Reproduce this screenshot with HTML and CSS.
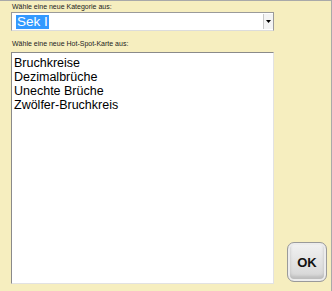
FILE: index.html
```html
<!DOCTYPE html>
<html lang="de">

<head>
    <meta charset="UTF-8">
    <meta name="viewport" content="width=device-width, initial-scale=1.0">
    <title>Hot-Spot-Karte</title>
    <link rel="stylesheet" href="styles.css">
</head>

<body>
    <div class="panel">
        <div class="main">
            <div class="cap">Wähle eine neue Kategorie aus:</div>
            <div class="combo">
                <span class="combo-text">Sek I</span>
                <span class="combo-btn">
                    <svg width="5" height="3" viewBox="0 0 5 3"><path d="M0 0H5L2.5 3Z" fill="#000"/></svg>
                </span>
            </div>

            <div class="cap cap2">Wähle eine neue Hot-Spot-Karte aus:</div>
            <ul class="list">
                <li>Bruchkreise</li>
                <li>Dezimalbrüche</li>
                <li>Unechte Brüche</li>
                <li>Zwölfer-Bruchkreis</li>
            </ul>
        </div>

        <div class="side">
            <button class="ok" type="button">OK</button>
        </div>
    </div>
</body>

</html>
```

FILE: styles.css
```css
body {
    margin: 0;
    font-family: "Liberation Sans", Arial, sans-serif;
}

.panel {
    width: 331px;
    height: 290px;
    background-color: #f6eebf;
    border-top: 1px solid #a9a9a9;
    border-right: 1px solid #a9a9a9;
    display: flex;
}

.main {
    width: 263px;
    margin-left: 11px;
    padding-top: 2px;
    display: flex;
    flex-direction: column;
}

.cap {
    font-size: 7px;
    line-height: 8px;
    color: #222;
    padding-left: 1px;
}

.cap2 {
    margin-top: 9px;
}

.combo {
    margin-top: 1px;
    height: 17px;
    background: #fff;
    border-top: 1px solid #9a9a9a;
    border-left: 1px solid #9a9a9a;
    border-right: 1px solid #9a9a9a;
    border-bottom: 1px solid #dcdcdc;
    display: flex;
    align-items: center;
    justify-content: space-between;
}

.combo-text {
    margin-left: 4px;
    padding: 0 1px;
    font-size: 13.5px;
    line-height: 14px;
    background: #3399ff;
    color: #fff;
}

.combo-btn {
    width: 9px;
    height: 15px;
    margin-right: 0;
    border-left: 1px solid #c8c8c8;
    background: #f4f4f4;
    display: flex;
    align-items: center;
    justify-content: center;
}

.list {
    list-style: none;
    margin: 4px 0 0;
    padding: 3px 2px;
    height: 224px;
    background: #fff;
    border-top: 1px solid #8a8a8a;
    border-left: 1px solid #8a8a8a;
    border-right: 1px solid #e2e2e2;
    border-bottom: 1px solid #e2e2e2;
    font-size: 12.5px;
    line-height: 14px;
    color: #000;
}

.side {
    flex: 1;
    display: flex;
    align-items: flex-end;
    padding: 0 4px 9px 13px;
}

.ok {
    width: 40px;
    height: 40px;
    border: 1px solid #9a9a9a;
    border-radius: 7px;
    background: linear-gradient(#f2f2f2, #d4d4d4);
    box-shadow: inset 0 0 0 2px #ececec, inset 0 -3px 3px 2px #bdbdbd;
    font-family: "Liberation Sans", Arial, sans-serif;
    font-weight: bold;
    font-size: 13px;
    color: #111;
    padding: 0;
    cursor: pointer;
}
```
